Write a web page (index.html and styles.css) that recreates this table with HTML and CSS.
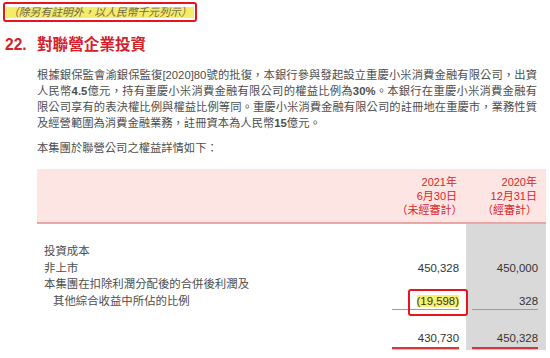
FILE: index.html
```html
<!DOCTYPE html>
<html lang="zh-Hant">
<head>
<meta charset="utf-8">
<title>對聯營企業投資</title>
<link rel="stylesheet" href="styles.css">
</head>
<body>
<div class="page">
  <div class="note"><span class="note-text">（除另有註明外，以人民幣千元列示）</span></div>
  <h2 class="heading"><span class="num">22.</span><span class="title">對聯營企業投資</span></h2>
  <div class="content">
    <p class="para">
      <span class="line">根據銀保監會渝銀保監復[2020]80號的批復，本銀行參與發起設立重慶小米消費金融有限公司，出資</span>
      <span class="line">人民幣<b>4.5</b>億元，持有重慶小米消費金融有限公司的權益比例為<b>30%</b>。本銀行在重慶小米消費金融有</span>
      <span class="line">限公司享有的表決權比例與權益比例等同。重慶小米消費金融有限公司的註冊地在重慶市，業務性質</span>
      <span class="line last">及經營範圍為消費金融業務，註冊資本為人民幣<b>15</b>億元。</span>
    </p>
    <p class="intro">本集團於聯營公司之權益詳情如下：</p>
    <div class="table">
      <div class="thead">
        <div class="th-label"></div>
        <div class="th"><span>2021年</span><span>6月30日</span><span class="halt">（未經審計）</span></div>
        <div class="th"><span>2020年</span><span>12月31日</span><span>（經審計）</span></div>
      </div>
      <div class="tbody">
        <div class="row first">
          <div class="c-label">投資成本</div>
          <div class="c-num"></div>
          <div class="c-num alt"></div>
        </div>
        <div class="row">
          <div class="c-label">非上市</div>
          <div class="c-num"><span class="v">450,328</span></div>
          <div class="c-num alt"><span class="v">450,000</span></div>
        </div>
        <div class="row">
          <div class="c-label">本集團在扣除利潤分配後的合併後利潤及</div>
          <div class="c-num"></div>
          <div class="c-num alt"></div>
        </div>
        <div class="row sub">
          <div class="c-label indent">其他綜合收益中所佔的比例</div>
          <div class="c-num marked"><span class="v"><span class="hl">(19,598)</span></span><span class="mark"></span></div>
          <div class="c-num alt"><span class="v">328</span></div>
        </div>
        <div class="row total">
          <div class="c-label"></div>
          <div class="c-num"><span class="v">430,730</span></div>
          <div class="c-num alt"><span class="v">450,328</span></div>
        </div>
      </div>
    </div>
  </div>
</div>
</body>
</html>
```

FILE: styles.css
```css
* {
  box-sizing: border-box;
  margin: 0;
  padding: 0;
}

html, body {
  background: #ffffff;
}

body {
  margin: 0;
  width: 550px;
  height: 358px;
  overflow: hidden;
  font-family: "Liberation Sans", "Noto Sans CJK TC", sans-serif;
  color: #4d4d4d;
}

.page {
  padding-top: 2px;
}

/* top notice */
.note {
  margin-left: 3px;
  width: 194px;
  height: 20px;
  border: 2px solid #e8141b;
  border-radius: 3px;
  display: flex;
  align-items: center;
  padding-left: 1px;
}

.note-text {
  background: #f6ec6a;
  color: #6d6a45;
  font-size: 10.8px;
  line-height: 11px;
  font-style: italic;
  padding: 0 2px;
}

/* heading */
.heading {
  margin-top: 13px;
  height: 20px;
  line-height: 20px;
  font-size: 15.6px;
  font-weight: 700;
  color: #d3222a;
  display: flex;
}

.heading .num {
  width: 37px;
  padding-left: 5px;
}

/* content */
.content {
  padding-left: 37px;
  width: 546px;
}

.para {
  margin-top: 11.5px;
  width: 500px;
  font-size: 11.3px;
  line-height: 16px;
  color: #4d4d4d;
}

.para .line {
  display: block;
  text-align: justify;
  text-align-last: justify;
  white-space: nowrap;
}

.para .line.last {
  text-align-last: left;
}

.para b {
  font-weight: 700;
}

.intro {
  margin-top: 9.5px;
  font-size: 11.3px;
  line-height: 16px;
  color: #4d4d4d;
}

/* table */
.table {
  margin-top: 13px;
  width: 509px;
}

.thead {
  display: grid;
  grid-template-columns: 349px 80px 80px;
  background: #fde5e3;
  border-bottom: 2px solid #eca5a5;
  padding-top: 6px;
  padding-bottom: 5px;
}

.th {
  display: flex;
  flex-direction: column;
  align-items: flex-end;
  padding-right: 9px;
  font-size: 11px;
  line-height: 14px;
  color: #d5272e;
  white-space: nowrap;
}

.th .halt {
  font-feature-settings: "halt";
}

.tbody {
  display: grid;
  grid-template-columns: 349px 80px 80px;
}

.row {
  display: contents;
}

.c-label {
  padding-left: 7px;
  font-size: 11.4px;
  line-height: 16.6px;
  color: #4d4d4d;
  white-space: nowrap;
}

.c-label.indent {
  padding-left: 16px;
}

.c-num {
  padding: 0 7px 0 6px;
  font-size: 11.4px;
  line-height: 16.6px;
  color: #333333;
  text-align: right;
}

.c-num.alt {
  background: #d9d9d9;
  padding: 0 8px 0 6px;
}

.c-num .v {
  display: block;
  min-height: 16.6px;
}

.row.first > * {
  padding-top: 19px;
}

.row.sub .v {
  border-bottom: 1px solid #ea7b7b;
}

.row.total > * {
  padding-top: 19.2px;
  padding-bottom: 1px;
}

.row.total .v {
  padding-bottom: 1px;
  border-bottom: 2px solid #d4373d;
  box-shadow: 0 1px 0 #f2b0b0;
}

.hl {
  background: #f9f06b;
}

.c-num.marked {
  position: relative;
}

.mark {
  position: absolute;
  top: -4px;
  left: 22px;
  width: 60px;
  height: 27px;
  border: 2px solid #e8141b;
  border-radius: 3px;
}
```
